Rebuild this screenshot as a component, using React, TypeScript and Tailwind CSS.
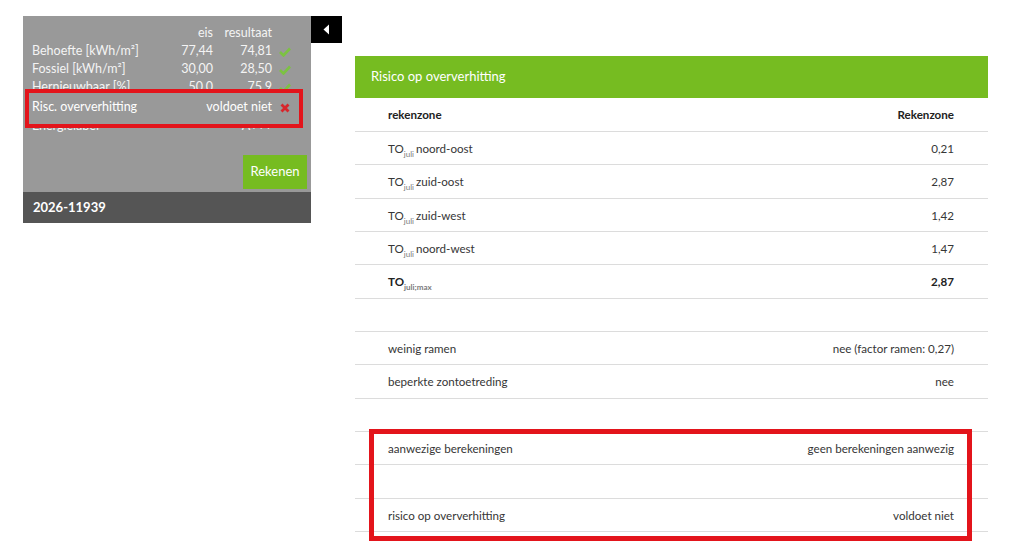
const font = { fontFamily: "Lato, 'Open Sans', sans-serif" }

function Check() {
  return (
    <svg width="12" height="10" viewBox="0 0 12 10" className="inline-block">
      <path d="M1 5 L4.5 8.5 L11 1.5" fill="none" stroke="#7cc242" strokeWidth="2.6" />
    </svg>
  )
}

function Cross() {
  return (
    <svg width="10" height="10" viewBox="0 0 10 10" className="inline-block">
      <path d="M1.5 1.5 L8.5 8.5 M8.5 1.5 L1.5 8.5" fill="none" stroke="#d8262c" strokeWidth="2.8" />
    </svg>
  )
}

const summary = [
  { label: "Behoefte [kWh/m²]", eis: "77,44", res: "74,81" },
  { label: "Fossiel [kWh/m²]", eis: "30,00", res: "28,50" },
  { label: "Hernieuwbaar [%]", eis: "50,0", res: "75,9" },
]

const zones = [
  { dir: "noord-oost", value: "0,21" },
  { dir: "zuid-oost", value: "2,87" },
  { dir: "zuid-west", value: "1,42" },
  { dir: "noord-west", value: "1,47" },
]

function Row({
  left,
  right,
  bold = false,
  first = false,
}: {
  left?: React.ReactNode
  right?: React.ReactNode
  bold?: boolean
  first?: boolean
}) {
  return (
    <div
      className={`${first ? "h-[34px]" : "h-[33.33px]"} border-b border-[#dcdcdc] flex items-center justify-between pl-[33px] pr-[34px] pt-[1px] text-[11.6px] ${
        bold ? "font-bold text-[#222]" : "text-[#363636]"
      }`}
    >
      <span>{left}</span>
      <span>{right}</span>
    </div>
  )
}

function TO({ sub }: { sub: string }) {
  return (
    <>
      TO<sub className="text-[8px] text-[#7a7a7a] align-[-2px] mr-[2px]">{sub}</sub>
    </>
  )
}

export default function App() {
  return (
    <div className="min-h-screen w-[1032px] h-[560px] bg-white overflow-hidden" style={font}>
      <div className="flex items-start pl-[23px] pt-[16px]">
        {/* sidebar summary */}
        <div className="w-[288px] bg-[#999999] text-[#f4f4f4]">
          <div className="pl-[9px] pr-[9px] pt-[8px] text-[12.5px] leading-[18px]">
            <div className="grid grid-cols-[1fr_60px_59px_30px]">
              <span />
              <span className="text-right">eis</span>
              <span className="text-right">resultaat</span>
              <span />
            </div>
            {summary.map((r) => (
              <div key={r.label} className="grid grid-cols-[1fr_60px_59px_30px]">
                <span>{r.label}</span>
                <span className="text-right">{r.eis}</span>
                <span className="text-right">{r.res}</span>
                <span className="pl-[7px]">
                  <Check />
                </span>
              </div>
            ))}
            <div className="relative z-10 grid grid-cols-[1fr_60px_59px_30px] pt-[2px] pb-[1px] text-white">
              <div className="absolute -left-[7px] -right-[1px] -top-[7px] -bottom-[11px] border-4 border-[#e3141b] bg-[#999999] -z-10" />
              <span>Risc. oververhitting</span>
              <span className="col-span-2 text-right">voldoet niet</span>
              <span className="pl-[8px]">
                <Cross />
              </span>
            </div>
            <div className="grid grid-cols-[1fr_60px_59px_30px]">
              <span>Energielabel</span>
              <span />
              <span className="text-right">A+++</span>
              <span />
            </div>
          </div>
          <div className="flex justify-end pt-[20px] pr-[4px] pb-[3px]">
            <button className="w-[64px] h-[34px] bg-[#76bc21] text-white text-[13px]">Rekenen</button>
          </div>
          <div className="h-[31px] bg-[#555555] flex items-center pl-[10px] text-[13px] font-bold text-white">
            2026-11939
          </div>
        </div>
        <div className="w-[31px] h-[27px] bg-black flex items-center justify-center">
          <svg width="7" height="11" viewBox="0 0 7 11">
            <path d="M6 0.5 L0.5 5.5 L6 10.5 Z" fill="#fff" />
          </svg>
        </div>

        {/* detail table */}
        <div className="relative ml-[13px] mt-[40px] w-[633px]">
          <div className="h-[42px] bg-[#76bc21] flex items-center pl-[16px] text-[13px] text-white">
            Risico op oververhitting
          </div>
          <Row left="rekenzone" right="Rekenzone" bold first />
          {zones.map((z) => (
            <Row
              key={z.dir}
              left={
                <>
                  <TO sub="juli" />
                  {z.dir}
                </>
              }
              right={z.value}
            />
          ))}
          <Row left={<TO sub="juli;max" />} right="2,87" bold />
          <Row />
          <Row left="weinig ramen" right="nee (factor ramen: 0,27)" />
          <Row left="beperkte zontoetreding" right="nee" />
          <Row />
          <Row left="aanwezige berekeningen" right="geen berekeningen aanwezig" />
          <Row />
          <Row left="risico op oververhitting" right="voldoet niet" />
          <div className="absolute left-[14px] top-[373px] w-[603px] h-[112px] border-[5px] border-[#e3141b]" />
        </div>
      </div>
    </div>
  )
}
